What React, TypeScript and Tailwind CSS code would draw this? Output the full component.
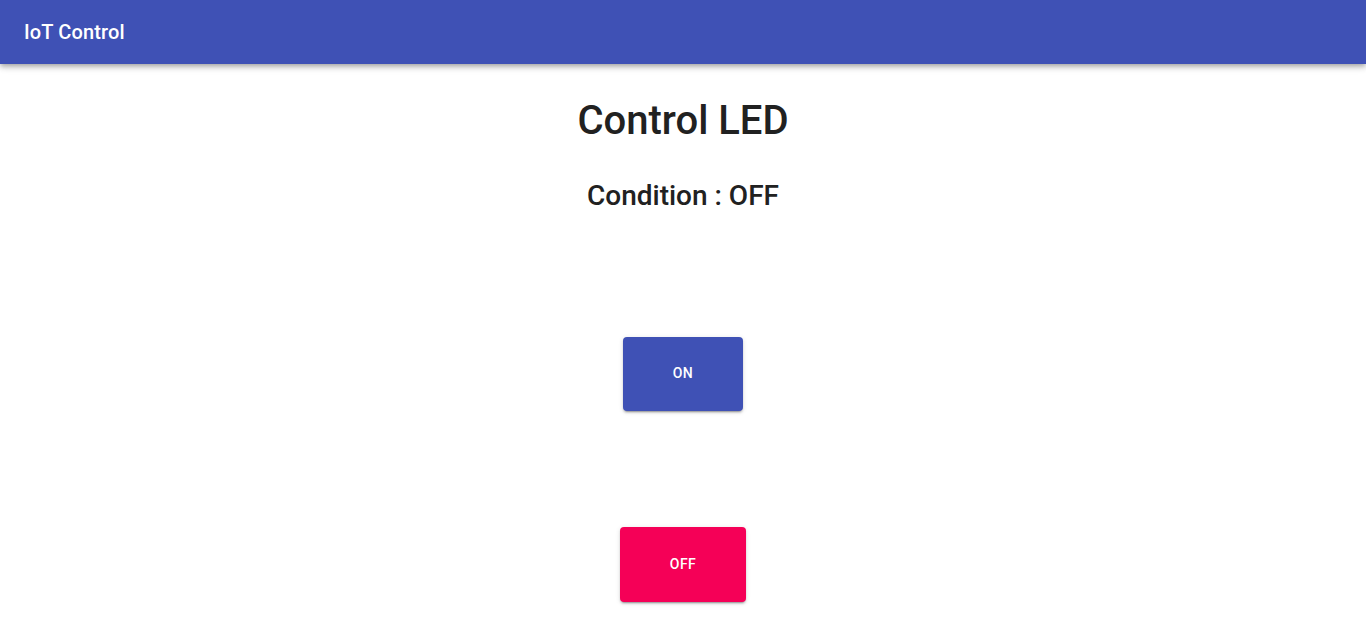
import React from "react";

export default function App() {
    return (
        <div className="min-h-screen bg-white" style={{ fontFamily: "Roboto, sans-serif" }}>
            <header className="h-16 bg-[#3f51b5] flex items-center px-6 shadow-[0_2px_4px_-1px_rgba(0,0,0,0.2),0_4px_5px_0_rgba(0,0,0,0.14),0_1px_10px_0_rgba(0,0,0,0.12)] relative">
                <h6 className="text-white text-[20px] font-medium tracking-[0.15px]">IoT Control</h6>
            </header>
            <main className="flex flex-col items-center">
                <h1 className="mt-[33px] text-[40px] leading-[48px] font-medium text-[#212121]">Control LED</h1>
                <h2 className="mt-[35px] text-[28px] leading-[32px] font-medium text-[#212121]">Condition : OFF</h2>
                <button className="mt-[125px] h-[74px] px-[50px] pb-[2px] rounded bg-[#3f51b5] text-white text-sm font-medium tracking-[0.4px] uppercase shadow-[0_3px_1px_-2px_rgba(0,0,0,0.2),0_2px_2px_0_rgba(0,0,0,0.14),0_1px_5px_0_rgba(0,0,0,0.12)]">
                    ON
                </button>
                <button className="mt-[116px] h-[75px] px-[50px] pb-[2px] rounded bg-[#f50057] text-white text-sm font-medium tracking-[0.4px] uppercase shadow-[0_3px_1px_-2px_rgba(0,0,0,0.2),0_2px_2px_0_rgba(0,0,0,0.14),0_1px_5px_0_rgba(0,0,0,0.12)]">
                    OFF
                </button>
            </main>
        </div>
    );
}
